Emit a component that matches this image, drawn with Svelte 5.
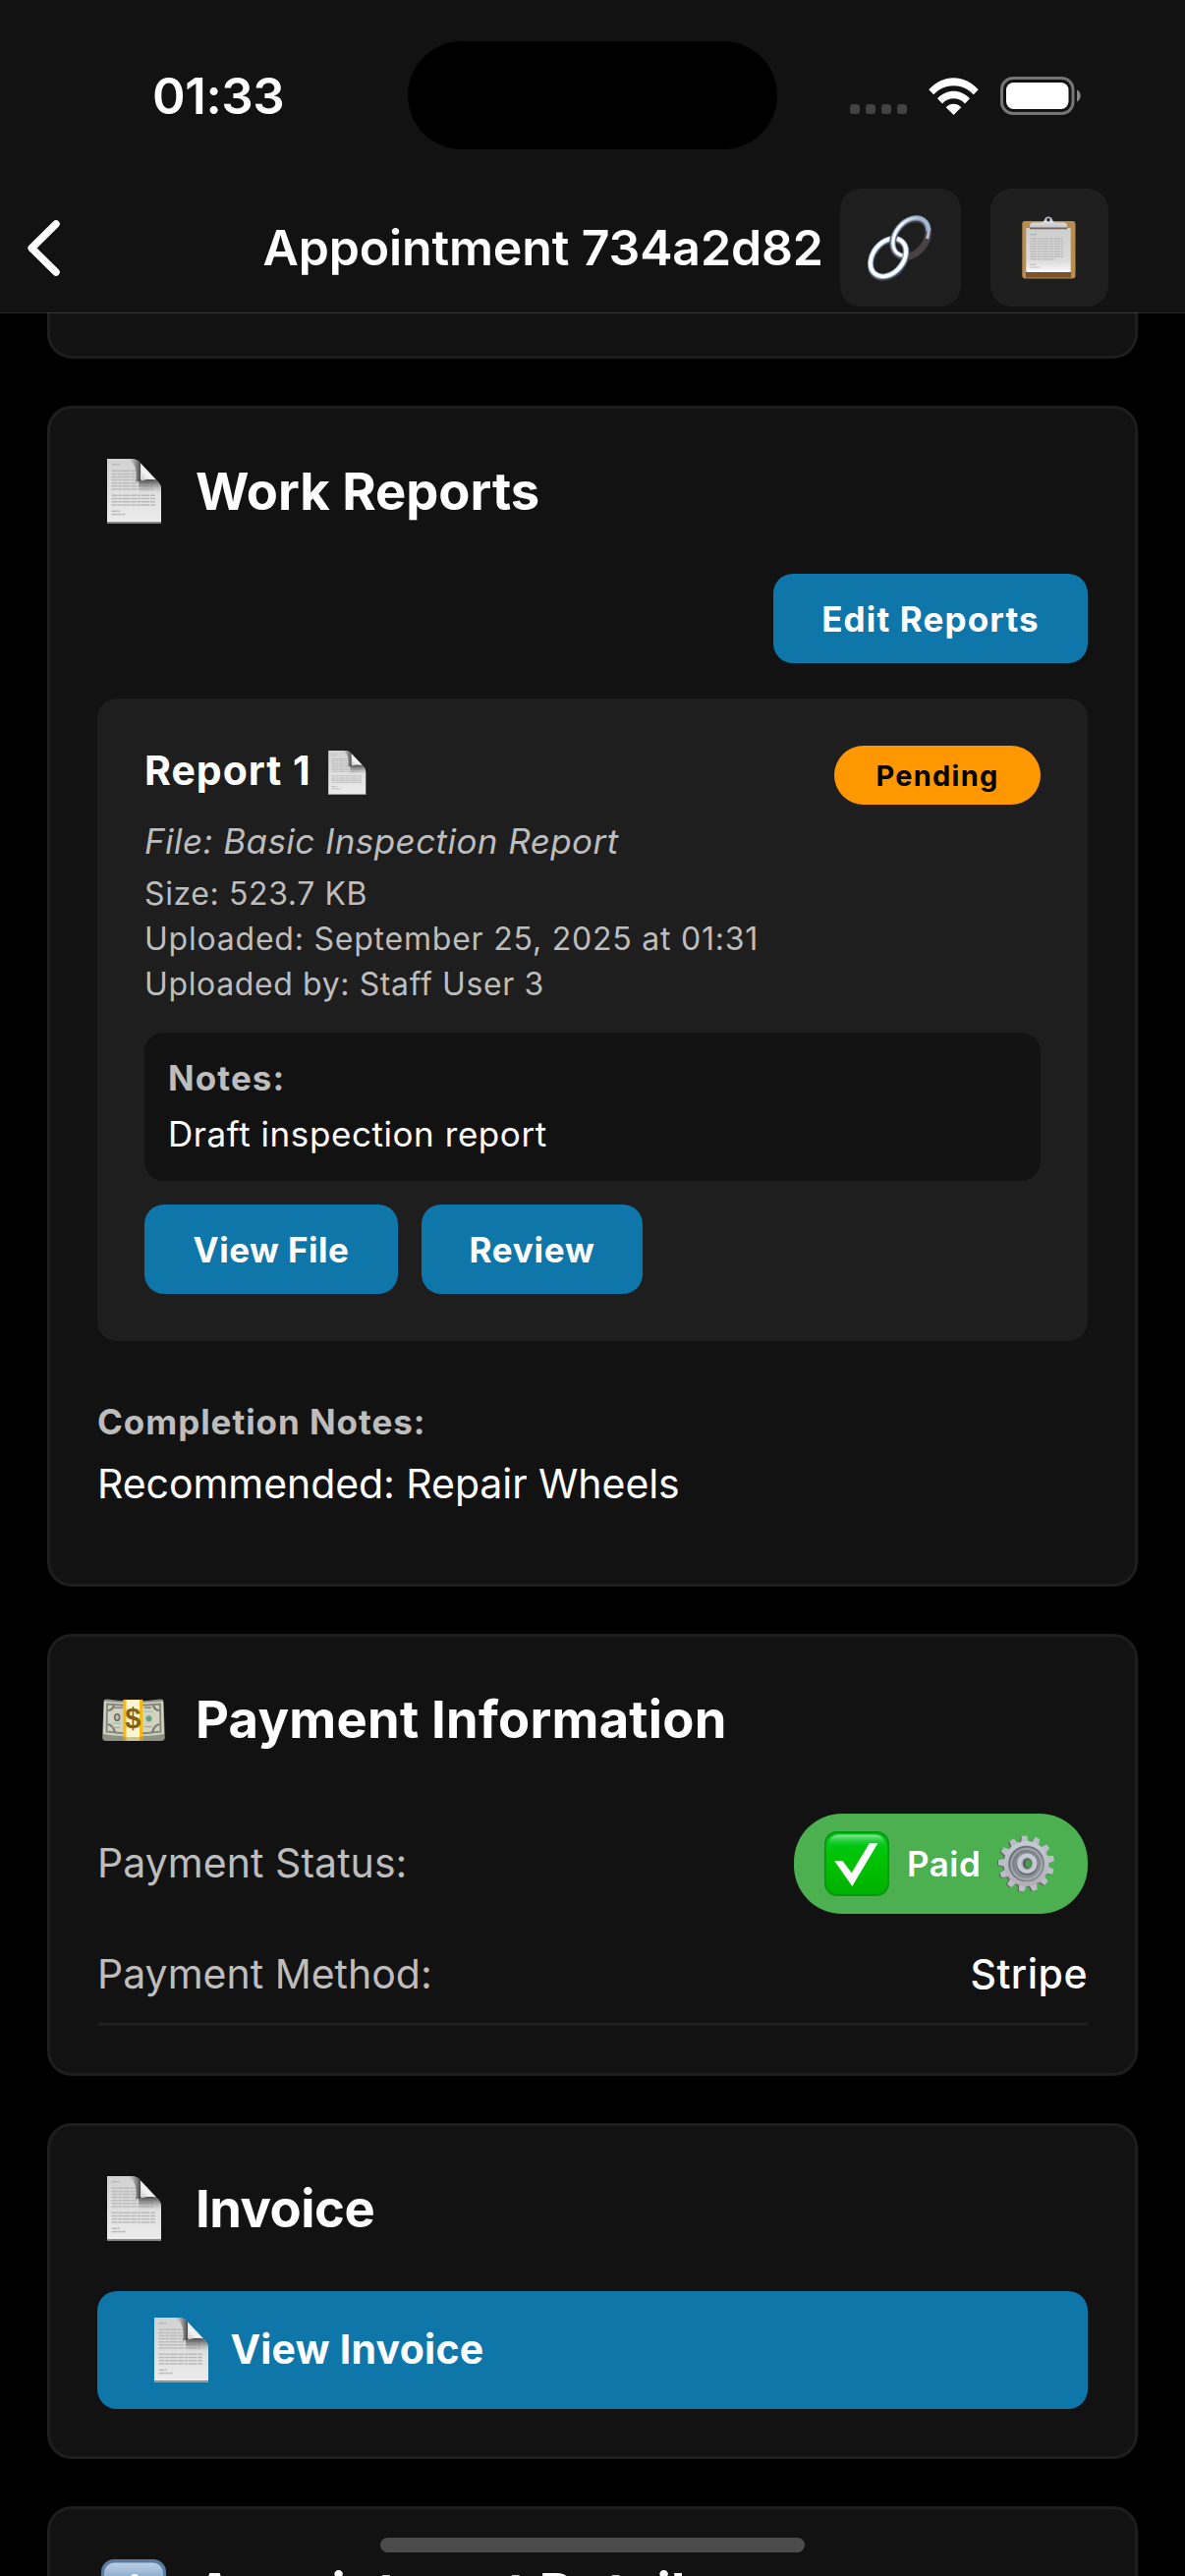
<script>
  const gearTeeth = Array.from({ length: 13 }, (_, i) => (i * 360) / 13 - 4);
  const clipboardLines = [23, 25.6, 28.2, 30.8, 33.4, 36, 38.6, 41.2, 43.8];
  const docFoldLines = [12.3, 15.4, 18.5, 21.6, 24.7, 27.8, 30.9];
  const docBodyLines = [37.3, 40.6, 43.8, 47];
</script>

{#snippet docIcon(size)}
  <svg class="doc {size}" viewBox="0 0 55.4 65.4" aria-hidden="true">
    <defs>
      <linearGradient id="docPaper" x1="0" y1="0" x2="0" y2="1">
        <stop offset="0" stop-color="#d2d2d2" />
        <stop offset="1" stop-color="#ececec" />
      </linearGradient>
      <linearGradient id="docShade" x1="0" y1="0" x2="0" y2="1">
        <stop offset="0" stop-color="#3c3c3c" stop-opacity="0.9" />
        <stop offset="0.45" stop-color="#777" stop-opacity="0.55" />
        <stop offset="1" stop-color="#ccc" stop-opacity="0" />
      </linearGradient>
      <linearGradient id="docCurl" x1="0" y1="0" x2="1" y2="0">
        <stop offset="0" stop-color="#888" stop-opacity="0" />
        <stop offset="1" stop-color="#2e2e2e" stop-opacity="0.85" />
      </linearGradient>
      <linearGradient id="docFlap" x1="0" y1="1" x2="0.7" y2="0.2">
        <stop offset="0" stop-color="#c4c4c4" />
        <stop offset="0.5" stop-color="#f4f4f4" />
        <stop offset="1" stop-color="#dadada" />
      </linearGradient>
    </defs>
    <path d="M0 0H26C31 .6 32.500 2.500 34 4.500L50 21.500C54 25 55.400 28 55.400 33V65.400H0Z" fill="url(#docPaper)" />
    <g stroke="#bababa" stroke-width="1.500" stroke-dasharray="6 .7 3.500 .6 8 .8">
      <path d="M4.600 5.700H13" />
      {#each docFoldLines as y}<path d="M4.600 {y}H{y < 20 ? 32 : 47}" />{/each}
      {#each docBodyLines as y}<path d="M4.600 {y}H49" />{/each}
      <path d="M4.600 53.200H13M4.600 56.400H18.500" />
    </g>
    <path d="M21 0H26C31 .6 32.500 2.500 34 4.500V22L29 24C31 14 29 4 21 0Z" fill="url(#docCurl)" />
    <path d="M32 21H49.500C54 25 55.400 28 55.400 35L46 33L33 36Z" fill="url(#docShade)" />
    <path d="M34 4.500L50 21.500C45 20 40 20.500 34.500 22.500C35 16 35 10 34 4.500Z" fill="url(#docFlap)" />
    <path d="M0 64.700H55.400" stroke="#8b8b8b" stroke-width="1.200" />
  </svg>
{/snippet}

<div class="screen">
  <header>
    <div class="status">
      <span class="time">01:33</span>
      <div class="island"></div>
      <div class="indicators">
        <svg class="dots" viewBox="0 0 58 10" aria-hidden="true">
          {#each [0, 16, 32, 48] as x}<rect {x} width="10" height="10" rx="3" fill="#424242" />{/each}
        </svg>
        <svg class="wifi" viewBox="0 0 51 38" aria-hidden="true">
          <path d="M0.300 12.300C14.500 -3.700 36.500 -3.700 50.700 12.300L45.800 17.300C34.500 5.300 16.500 5.300 5.200 17.300Z" fill="#fff" />
          <path d="M9 21.300C18.500 11.200 32.500 11.200 42 21.300L37 26.400C30.500 19.600 20.500 19.600 14 26.400Z" fill="#fff" />
          <path d="M17.700 30.200C22 25.600 29 25.600 33.300 30.200L25.500 38Z" fill="#fff" />
        </svg>
        <svg class="battery" viewBox="0 0 82 39" aria-hidden="true">
          <rect x="1.500" y="1.500" width="72.500" height="36" rx="11.500" fill="none" stroke="#757575" stroke-width="3" />
          <rect x="6" y="6" width="63.500" height="27" rx="7.500" fill="#fff" />
          <path d="M78 13.500C83 15.500 83 23.500 78 25.500Z" fill="#858585" />
        </svg>
      </div>
    </div>
    <div class="nav">
      <svg class="back" viewBox="0 0 33 57" aria-hidden="true">
        <path d="M29 4L4.200 28.500L29 53" fill="none" stroke="#fff" stroke-width="7.500" stroke-linecap="round" stroke-linejoin="round" />
      </svg>
      <h1>Appointment 734a2d82</h1>
      <div class="actions">
        <button class="square link" aria-label="Copy link">
          <svg viewBox="0 0 67 67" width="67" height="67">
            <defs>
              <linearGradient id="metalA" x1="0" y1="0" x2="1" y2="0.300">
                <stop offset="0" stop-color="#fff" />
                <stop offset="0.550" stop-color="#f3f8ff" />
                <stop offset="1" stop-color="#a9b8cc" />
              </linearGradient>
              <clipPath id="overPart"><rect x="30" y="33" width="20" height="34" /></clipPath>
            </defs>
            <g fill="none" transform="translate(21 43) rotate(-51)">
              <ellipse cx="-.8" cy=".8" rx="21.500" ry="15.500" stroke="#4b4c52" stroke-width="6.600" />
              <ellipse rx="21.500" ry="15.500" stroke="#9dbfe4" stroke-width="5.400" />
              <ellipse rx="21.500" ry="15.500" stroke="#fff" stroke-width="3.500" />
            </g>
            <g fill="none" transform="translate(43.800 22.300) rotate(-51)">
              <ellipse cx="-.8" cy=".4" rx="21.500" ry="15.500" stroke="#4a4144" stroke-width="6.800" />
              <ellipse rx="21.500" ry="15.500" stroke="#7f9bbf" stroke-width="5.200" stroke-dasharray="80 38" stroke-dashoffset="68" />
              <ellipse cx=".3" cy="0" rx="21.500" ry="15.500" stroke="url(#metalA)" stroke-width="3" stroke-dasharray="88 30" stroke-dashoffset="68" />
            </g>
            <g clip-path="url(#overPart)">
              <g fill="none" transform="translate(21 43) rotate(-51)">
                <ellipse cx="-.8" cy=".8" rx="21.500" ry="15.500" stroke="#4b4c52" stroke-width="6.600" />
                <ellipse rx="21.500" ry="15.500" stroke="#9dbfe4" stroke-width="5.400" />
                <ellipse rx="21.500" ry="15.500" stroke="#fff" stroke-width="3.500" />
              </g>
            </g>
          </svg>
        </button>
        <button class="square" aria-label="Copy details">
          <svg class="clipboard" viewBox="0 0 55 64" width="55" height="64">
            <defs>
              <linearGradient id="sheet" x1="0" y1="0" x2="0" y2="1">
                <stop offset="0" stop-color="#cdcdcd" />
                <stop offset=".75" stop-color="#dcdcdc" />
                <stop offset="1" stop-color="#fbfbfb" />
              </linearGradient>
              <linearGradient id="clip" x1="0" y1="0" x2="0" y2="1">
                <stop offset="0" stop-color="#a4acb8" />
                <stop offset=".4" stop-color="#dcdee2" />
                <stop offset="1" stop-color="#c0c0c3" />
              </linearGradient>
            </defs>
            <rect x=".3" y="5" width="54.200" height="58.500" rx="3" fill="#b88d52" />
            <rect x="4" y="56" width="46" height="6.500" fill="#7b5229" />
            <rect x="4.300" y="12" width="45.400" height="45" fill="url(#sheet)" />
            <path d="M8.300 18.700H15" stroke="#b0b0b0" stroke-width="1.200" />
            {#each clipboardLines as y}<path d="M8.300 {y}H{y > 43 ? 34 : 42}" stroke="#bcbcbc" stroke-width="1.400" stroke-dasharray="7 .6 4 .5" />{/each}
            <path d="M8.300 49.300H14.500M8.300 52H18.500" stroke="#c0c0c0" stroke-width="1.200" />
            <path d="M8 13V9.500C8 7.500 9.500 6.500 12 6.500H19C22 6.500 22.600 5 23 3.500A4.200 4.200 0 0 1 31 3.500C31.400 5 32 6.500 35 6.500H42C44.500 6.500 46 7.500 46 9.500V13Z" fill="url(#clip)" />
            <path d="M8 12.300H46" stroke="#75665f" stroke-width="1.800" />
            <circle cx="27" cy="3.800" r="1.700" fill="#22242a" />
          </svg>
        </button>
      </div>
    </div>
  </header>

  <main>
    <section class="card previous"></section>

    <section class="card">
      <div class="heading">
        <span class="slot">{@render docIcon('large')}</span>
        <h2>Work Reports</h2>
      </div>
      <div class="toolbar"><button class="primary edit">Edit Reports</button></div>

      <article class="report">
        <div class="report-top">
          <h3><span>Report 1</span>{@render docIcon('small')}</h3>
          <span class="badge">Pending</span>
        </div>
        <p class="file">File: Basic Inspection Report</p>
        <ul class="meta">
          <li class="size">Size: 523.7 KB</li>
          <li class="date">Uploaded: September 25, 2025 at 01:31</li>
          <li class="author">Uploaded by: Staff User 3</li>
        </ul>
        <div class="notes">
          <p class="notes-label">Notes:</p>
          <p class="notes-text">Draft inspection report</p>
        </div>
        <div class="buttons">
          <button class="primary view">View File</button>
          <button class="primary review">Review</button>
        </div>
      </article>

      <div class="completion">
        <p class="completion-label">Completion Notes:</p>
        <p class="completion-text">Recommended: Repair Wheels</p>
      </div>
    </section>

    <section class="card">
      <div class="heading">
        <span class="slot money">
          <svg viewBox="0 0 64 43" width="64" height="43" aria-hidden="true">
            <path d="M.3 36L1.500 3C1.500 1 3 .3 5 .5C22 3 42 3 59 .5C61 .3 62.500 1 62.500 3L63.700 36V40C63.700 42 62.500 43 60 43H4C1.500 43 .3 42 .3 40Z" fill="#8d9384" />
            <path d="M1 36L2 2.500C20 4.500 44 4.500 62 2.500L63 36C44 39 20 39 1 36Z" fill="#d3d3c1" />
            <path d="M4.500 33.500L5 5.500C22 7 42 7 59 5.500L59.500 33.500C42 36 22 36 4.500 33.500Z" fill="none" stroke="#86867b" stroke-width="1.900" />
            <path d="M6 12Q11 11.500 12 6.500M58 12Q53 11.500 52 6.500M5.500 26Q11 27 13 34M58.500 26Q53 27 51 34" fill="none" stroke="#7b7b71" stroke-width="2.200" />
            <path d="M12 9.200H21M43 9.200H50" stroke="#85857b" stroke-width="1.600" />
            <ellipse cx="15.200" cy="19" rx="2.500" ry="3.200" fill="#c4c4b4" stroke="#66665f" stroke-width="1.500" />
            <circle cx="47.500" cy="20.300" r="3.100" fill="#68a187" />
            <path d="M43 13.300H52M10 25.300H19" stroke="#a5c5af" stroke-width="1.500" />
            <path d="M43 28.500H51M10 29.500H18" stroke="#a0a094" stroke-width="1.200" />
            <path d="M21.300 1H41.300V43H21.300Z" fill="#f7b916" />
            <path d="M24.500 1.200H38V43H24.500Z" fill="#fcf4d3" />
            <path d="M21.300 39H41.300V43H21.300Z" fill="#8e7a35" opacity=".4" />
            <text x="31.200" y="29.600" text-anchor="middle" class="dollar">$</text>
          </svg>
        </span>
        <h2 class="payment">Payment Information</h2>
      </div>
      <div class="row status-row">
        <span class="label status-label">Payment Status:</span>
        <span class="paid">
          <svg viewBox="0 0 66 66" width="66" height="66" aria-hidden="true">
            <defs>
              <linearGradient id="okFill" x1="0" y1="0" x2="0" y2="1">
                <stop offset="0" stop-color="#00c81e" />
                <stop offset=".5" stop-color="#00c200" />
                <stop offset="1" stop-color="#00b000" />
              </linearGradient>
              <linearGradient id="okGloss" x1="0" y1="0" x2="0" y2="1">
                <stop offset="0" stop-color="#8fe89c" />
                <stop offset="1" stop-color="#10c828" stop-opacity="0" />
              </linearGradient>
            </defs>
            <rect width="66" height="66" rx="13" fill="#06980f" />
            <rect x="1.800" y="2" width="62.400" height="62" rx="11.500" fill="url(#okFill)" />
            <path d="M4 16C4 7 8 3.500 16 3.500H50C58 3.500 62 7 62 16Z" fill="url(#okGloss)" />
            <path d="M10.300 30.300H18.700L27.700 42.300L45.700 12.300H54.300L28.300 56Z" fill="#fff" />
          </svg>
          <span class="paid-text">Paid</span>
          <svg class="gear" viewBox="-29.500 -29 59 58" width="59" height="58" aria-hidden="true">
            <defs>
              <linearGradient id="steel" x1="0" y1="0" x2="0" y2="1">
                <stop offset="0" stop-color="#c3ccd6" />
                <stop offset="1" stop-color="#b3adb5" />
              </linearGradient>
            </defs>
            <g fill="#625f60" transform="translate(-1.300 .7)">
              {#each gearTeeth as a}<path d="M-3.800 -22L-2.700 -28.300H2.700L3.800 -22Z" transform="rotate({a})" />{/each}
              <circle r="23" />
            </g>
            <g fill="#b9bec7">
              {#each gearTeeth as a}<path d="M-4 -21L-2.600 -28.500H2.600L4 -21Z" transform="rotate({a})" />{/each}
            </g>
            <circle r="23" fill="url(#steel)" />
            <circle r="18.300" fill="#6f747a" />
            <circle cx=".4" cy=".6" r="16.800" fill="#9fa4aa" />
            <circle r="14.300" fill="#7b8187" />
            <circle cx=".5" cy="1" r="12.500" fill="#8f949b" />
            <circle cx=".8" cy="1" r="11" fill="#686d73" />
            <circle cx=".8" cy="-.3" r="10.300" fill="#c6cbd3" />
            <circle cx="1" cy="-.2" r="6.600" fill="#b4b8c0" />
            <ellipse cx="1" cy="-.2" rx="4.700" ry="5.600" fill="#5a5d5c" />
            <ellipse cx="2" cy=".2" rx="3" ry="4.200" fill="#4c9a50" />
          </svg>
        </span>
      </div>
      <div class="row method-row">
        <span class="label method-label">Payment Method:</span>
        <span class="value">Stripe</span>
      </div>
    </section>

    <section class="card">
      <div class="heading">
        <span class="slot">{@render docIcon('large')}</span>
        <h2 class="invoice">Invoice</h2>
      </div>
      <button class="primary wide">{@render docIcon('large')}<span>View Invoice</span></button>
    </section>

    <section class="card">
      <div class="heading">
        <span class="slot info">
          <svg viewBox="0 0 66 66" width="66" height="66" aria-hidden="true">
            <defs>
              <linearGradient id="infoFill" x1="0" y1="0" x2="0" y2="1">
                <stop offset="0" stop-color="#bdd0e4" />
                <stop offset=".28" stop-color="#86a9cd" />
                <stop offset="1" stop-color="#6c97c4" />
              </linearGradient>
            </defs>
            <rect width="66" height="66" rx="13" fill="#5a7ca1" />
            <rect x="3" y="3.500" width="60" height="59.500" rx="10.500" fill="url(#infoFill)" />
            <circle cx="34" cy="19.500" r="4.500" fill="#fff" />
            <path d="M26 27H38V49H42V53H26V49H30V31H26Z" fill="#fff" />
          </svg>
        </span>
        <h2 class="details">Appointment Details</h2>
      </div>
    </section>
  </main>

  <div class="home-indicator"></div>
</div>

<style>
  :global(body) {
    background: #000;
  }
  .screen {
    position: relative;
    width: 1206px;
    height: 2622px;
    overflow: hidden;
    background: #000;
    color: #fff;
    font-family: Inter, 'Liberation Sans', sans-serif;
    white-space: nowrap;
  }
  h1, h2, h3, p, ul {
    margin: 0;
    padding: 0;
    list-style: none;
  }
  svg {
    display: block;
    flex: none;
  }
  button {
    border: 0;
    padding: 0;
    color: inherit;
    font-family: inherit;
  }

  header {
    position: relative;
    height: 318px;
    background: #121212;
  }
  header::after {
    content: '';
    position: absolute;
    top: 100%;
    left: 0;
    right: 0;
    height: 1px;
    background: rgba(255, 255, 255, 0.15);
  }
  .status {
    display: flex;
    align-items: center;
    justify-content: space-between;
    box-sizing: border-box;
    height: 186px;
    padding: 9px 106px 0 155px;
  }
  .time {
    font-size: 51px;
    font-weight: 600;
    letter-spacing: -0.4px;
  }
  .island {
    position: absolute;
    top: 42px;
    left: 415px;
    width: 376px;
    height: 110px;
    border-radius: 55px;
    background: #000;
  }
  .indicators {
    display: flex;
    align-items: center;
    gap: 22px;
  }
  .dots {
    width: 58px;
    height: 10px;
    margin-top: 27px;
  }
  .wifi {
    width: 51px;
    height: 38px;
  }
  .battery {
    width: 82px;
    height: 39px;
  }
  .nav {
    display: flex;
    align-items: center;
    height: 132px;
    padding: 0 78px 0 28px;
  }
  .back {
    width: 33px;
    height: 57px;
  }
  h1 {
    margin-left: 206.5px;
    font-size: 50px;
    font-weight: 600;
    letter-spacing: -0.15px;
  }
  .actions {
    display: flex;
    gap: 30px;
    margin-left: auto;
  }
  .square {
    display: grid;
    place-items: center;
    width: 120px;
    height: 120px;
    border-radius: 21px;
    background: #1e1e1e;
  }
  .square.link {
    width: 123px;
  }
  .clipboard {
    margin-right: 2px;
  }

  main {
    display: flex;
    flex-direction: column;
    gap: 48px;
    padding: 0 48px;
  }
  .card {
    padding: 48px;
    border: 3px solid #1e1e1e;
    border-radius: 25px;
    background: #121212;
  }
  .card.previous {
    box-sizing: border-box;
    height: 47px;
    padding: 0;
    border-top: 0;
    border-radius: 0 0 25px 25px;
  }
  .heading {
    display: flex;
    align-items: center;
    height: 72px;
  }
  .slot {
    box-sizing: border-box;
    width: 100px;
    padding-left: 9.5px;
  }
  .slot.money {
    padding-left: 5px;
  }
  .slot.info {
    padding-left: 4px;
  }
  .doc.large {
    width: 55.4px;
    height: 65.4px;
  }
  .doc.small {
    width: 38.5px;
    height: 45px;
  }
  h2 {
    font-size: 52.5px;
    font-weight: 700;
  }
  h2.payment {
    letter-spacing: 0.25px;
  }
  h2.details {
    letter-spacing: 0.2px;
  }
  h2.invoice {
    letter-spacing: -0.48px;
  }

  .primary {
    height: 91px;
    border-radius: 20px;
    background: #0f76aa;
    font-size: 35px;
    font-weight: 670;
    line-height: 92px;
  }
  .toolbar {
    display: flex;
    justify-content: flex-end;
    margin-top: 48px;
  }
  .edit {
    width: 320px;
    letter-spacing: 1.15px;
  }
  .report {
    margin-top: 36px;
    padding: 48px;
    border-radius: 20px;
    background: #1e1e1e;
  }
  .report-top {
    display: flex;
    justify-content: space-between;
    height: 60px;
  }
  h3 {
    display: flex;
    align-items: center;
    height: 50px;
    font-size: 41px;
    font-weight: 660;
    letter-spacing: 1px;
  }
  h3 span {
    width: 187px;
  }
  h3 .doc.small {
    margin-top: 5px;
  }
  h3 :global(svg) {
    margin-top: 5px;
  }
  .badge {
    width: 210px;
    height: 60px;
    border-radius: 30px;
    background: #ff9800;
    color: #000;
    font-size: 29px;
    font-weight: 660;
    letter-spacing: 1.25px;
    line-height: 61px;
    text-align: center;
  }
  .file {
    margin-top: 15px;
    color: #bdbdbd;
    font-size: 35px;
    font-style: italic;
    letter-spacing: 0.42px;
    line-height: 44px;
  }
  .meta {
    margin-top: 9px;
    color: #bdbdbd;
    font-size: 32px;
    line-height: 46px;
  }
  .size {
    letter-spacing: 0.6px;
  }
  .date {
    letter-spacing: 0.78px;
  }
  .author {
    letter-spacing: 0.62px;
  }
  .notes {
    display: flex;
    flex-direction: column;
    gap: 13px;
    margin-top: 26px;
    padding: 24px 24px 26px;
    border-radius: 20px;
    background: #121212;
    font-size: 35px;
    line-height: 44px;
  }
  .notes-label {
    color: #bdbdbd;
    font-weight: 660;
    letter-spacing: 1.1px;
  }
  .notes-text {
    letter-spacing: 0.57px;
  }
  .buttons {
    display: flex;
    gap: 24px;
    margin-top: 24px;
  }
  .view {
    width: 258px;
    letter-spacing: 0.5px;
  }
  .review {
    width: 225px;
    letter-spacing: 0.8px;
  }
  .completion {
    display: flex;
    flex-direction: column;
    gap: 16px;
    padding: 60px 0 29px;
  }
  .completion-label {
    color: #bdbdbd;
    font-size: 35px;
    font-weight: 660;
    letter-spacing: 0.95px;
    line-height: 44px;
  }
  .completion-text {
    font-size: 41px;
    letter-spacing: -0.06px;
    line-height: 50px;
  }

  .dollar {
    fill: #86610f;
    font-family: 'Liberation Sans', sans-serif;
    font-size: 29px;
    font-weight: 700;
  }
  .row {
    display: flex;
    align-items: center;
    justify-content: space-between;
    font-size: 41px;
    line-height: 50px;
  }
  .label {
    color: #bdbdbd;
  }
  .status-row {
    margin-top: 48px;
    padding: 12px 0;
  }
  .status-label {
    margin-bottom: 2px;
    letter-spacing: 0.05px;
  }
  .method-row {
    padding: 24px 0 25px;
    border-bottom: 3px solid #1e1e1e;
  }
  .method-label {
    letter-spacing: 0;
  }
  .value {
    font-weight: 500;
    letter-spacing: 0.5px;
  }
  .paid {
    display: flex;
    align-items: center;
    box-sizing: border-box;
    width: 299px;
    height: 102px;
    padding: 0 33px 0 31px;
    border-radius: 49px;
    background: #4caf50;
  }
  .paid-text {
    margin-left: 18px;
    font-size: 35px;
    font-weight: 600;
    letter-spacing: 0.5px;
  }
  .gear {
    margin-left: auto;
  }

  .wide {
    display: flex;
    align-items: center;
    gap: 22.5px;
    width: 100%;
    height: 120px;
    margin-top: 48px;
    padding-left: 57.5px;
    font-size: 41px;
    font-weight: 650;
    letter-spacing: 0.25px;
    line-height: 118px;
  }
  .wide span {
    height: 120px;
  }

  .home-indicator {
    position: absolute;
    left: 387px;
    bottom: 24px;
    width: 432px;
    height: 15px;
    border-radius: 8px;
    background: #4b4b4b;
  }
</style>
